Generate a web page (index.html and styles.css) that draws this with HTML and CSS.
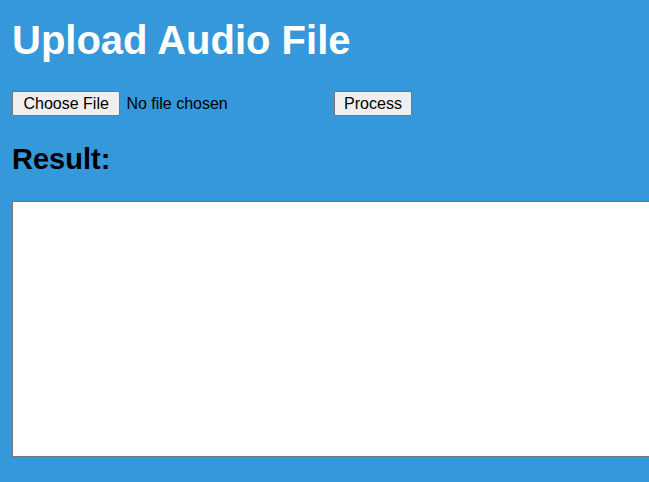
FILE: index.html
```html
<!DOCTYPE html>
<html lang="en">
<head>
<meta charset="utf-8">
<title>Upload Audio File</title>
<link rel="stylesheet" href="styles.css">
</head>
<body>
<main class="page">
  <h1 class="title">Upload Audio File</h1>
  <form class="upload-row">
    <input class="file-input" type="file" accept="audio/*">
    <button class="btn" type="button">Process</button>
  </form>
  <h2 class="result-title">Result:</h2>
  <textarea class="result-box"></textarea>
</main>
</body>
</html>
```
FILE: styles.css
```css
html, body {
  margin: 0;
  padding: 0;
}
body {
  background: #3498db;
  font-family: "Liberation Sans", Arial, sans-serif;
  overflow: hidden;
  height: 482px;
}
.page {
  padding: 0 12px;
}
.title {
  margin: 17px 0 0;
  font-size: 40px;
  line-height: 46px;
  font-weight: bold;
  color: #ffffff;
}
.upload-row {
  display: flex;
  align-items: center;
  margin: 28px 0 0;
  height: 25px;
}
.file-input {
  width: 318px;
  margin: 0 4px 0 0;
  font-family: "Liberation Sans", Arial, sans-serif;
  font-size: 16px;
  color: #000;
}
.file-input::file-selector-button,
.btn {
  font-family: "Liberation Sans", Arial, sans-serif;
  font-size: 16px;
  line-height: 19px;
  height: 25px;
  padding: 2px 9px;
  background: #efefef;
  border: 1px solid #767676;
  border-radius: 2px;
  color: #000;
  box-sizing: border-box;
}
.file-input::file-selector-button {
  padding: 2px 10.5px;
  margin: 0 6px 0 0;
}
.btn {
  margin: 0;
  width: 78px;
}
.result-title {
  margin: 27px 0 0;
  font-size: 29px;
  line-height: 32px;
  font-weight: bold;
  color: #000;
}
.result-box {
  display: block;
  margin: 26px 0 0;
  width: calc(100% + 20px);
  height: 256px;
  box-sizing: border-box;
  border: 1px solid #767676;
  background: #fff;
  resize: none;
  padding: 2px;
}
```
